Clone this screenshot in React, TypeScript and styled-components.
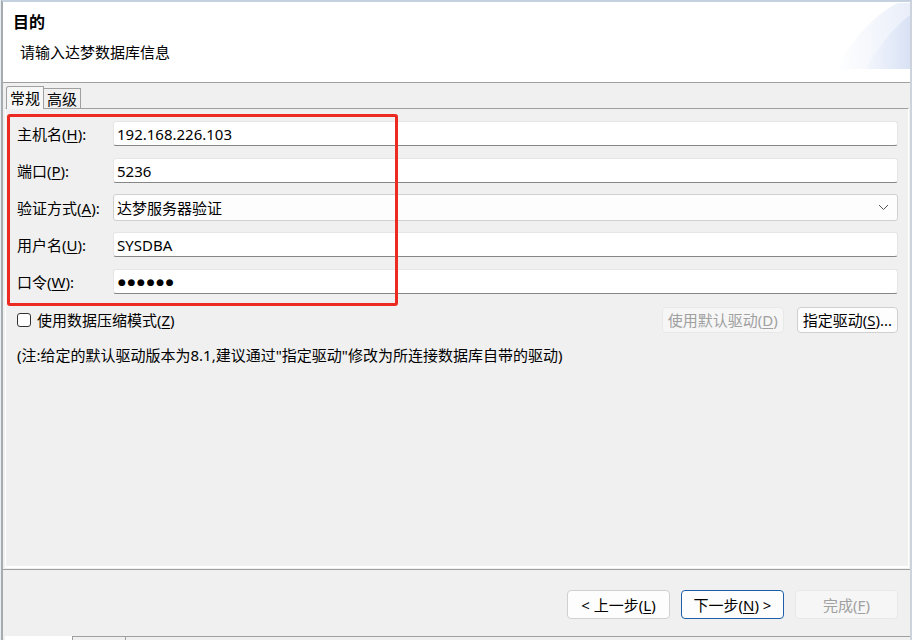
import React from 'react';
import styled, { createGlobalStyle } from 'styled-components';

const GlobalStyle = createGlobalStyle`
  html, body {
    margin: 0;
    padding: 0;
    background: #e9eef3;
  }
  body {
    font-family: "Noto Sans", "Noto Sans CJK SC", sans-serif;
    font-size: 15px;
    color: #000;
  }
  * {
    box-sizing: border-box;
  }
`;

const Frame = styled.div`
  width: 912px;
  height: 640px;
  padding-left: 1px;
  background: #e9eef3;
`;

const Window = styled.div`
  width: 911px;
  height: 640px;
  display: flex;
  flex-direction: column;
  background: #f0f0f0;
  border-top: 2px solid #c5d1de;
  border-left: 2px solid #a6abb0;
  border-right: 2px solid #ccd3dc;
`;

const Header = styled.div`
  height: 81px;
  flex: none;
  display: flex;
  background: #fff;
  border-bottom: 1px solid #a0a0a0;
`;

const HeaderText = styled.div`
  flex: 1;
  padding: 10px 0 0 10px;
  display: flex;
  flex-direction: column;
  gap: 10px;
`;

const Title = styled.div`
  font-size: 16px;
  font-weight: bold;
  line-height: 20px;
`;

const Subtitle = styled.div`
  font-size: 15px;
  line-height: 20px;
  padding-left: 7px;
`;

const Banner = styled.svg`
  flex: none;
  margin-top: 1px;
`;

const Body = styled.div`
  flex: 1;
  display: flex;
  flex-direction: column;
  padding: 3px 0 1px 2px;
`;

const TabRow = styled.div`
  display: flex;
  align-items: flex-end;
  height: 22px;
  padding-left: 1px;
`;

const Tab = styled.div<{ $active?: boolean }>`
  height: ${({ $active }) => ($active ? '23px' : '20px')};
  margin-bottom: ${({ $active }) => ($active ? '-1px' : '0')};
  padding: 0 3px;
  display: flex;
  align-items: center;
  font-size: 15px;
  line-height: 20px;
  background: ${({ $active }) => ($active ? '#f7f7f7' : '#f0f0f0')};
  border: 1px solid #a0a0a0;
  border-bottom: none;
  border-left: ${({ $active }) => ($active ? '1px solid #a0a0a0' : 'none')};
  border-radius: ${({ $active }) => ($active ? '3px 0 0 0' : '0')};
  position: relative;
  z-index: ${({ $active }) => ($active ? 1 : 0)};
`;

const Panel = styled.div`
  flex: 1;
  margin-right: 1px;
  border-top: 1px solid #a0a0a0;
  border-left: 1px solid #fff;
  border-right: 1px solid #fff;
  border-bottom: 2px solid #fff;
  padding: 6px 10px 0 11px;
`;

const Form = styled.div`
  position: relative;
  display: grid;
  grid-template-columns: 96px 1fr;
  grid-auto-rows: 37px;
  align-items: center;
`;

const Highlight = styled.div`
  position: absolute;
  left: -10px;
  top: -1px;
  width: 391px;
  height: 192px;
  border: 3px solid #ec2a22;
  border-radius: 3px;
  pointer-events: none;
`;

const Label = styled.div`
  font-size: 15px;
  line-height: 20px;
  white-space: nowrap;
  u {
    text-decoration-thickness: 1px;
    text-underline-offset: 2px;
  }
`;

const Field = styled.div`
  height: 25px;
  display: flex;
  align-items: center;
  padding-left: 3px;
  background: #fff;
  border: 1px solid #e6e6e6;
  border-bottom: 1px solid #868686;
  border-radius: 3px;
  font-size: 15px;
  line-height: 20px;
`;

const Combo = styled(Field)`
  height: 27px;
  justify-content: space-between;
  padding-right: 8px;
  background: #fdfdfd;
  border: 1px solid #d0d0d0;
`;

const Dots = styled.span`
  font-family: "DejaVu Sans", sans-serif;
  font-size: 9px;
  letter-spacing: 1.7px;
  padding-left: 1px;
`;

const OptionRow = styled.div`
  margin-top: 7px;
  height: 26px;
  display: flex;
  align-items: center;
  gap: 13px;
`;

const CheckLabel = styled.label`
  flex: 1;
  display: flex;
  align-items: center;
  gap: 6px;
  font-size: 15px;
  line-height: 20px;
  u {
    text-decoration-thickness: 1px;
    text-underline-offset: 2px;
  }
`;

const CheckBox = styled.span`
  width: 14px;
  height: 14px;
  border: 1px solid #333;
  border-radius: 3px;
  background: #fff;
`;

const Button = styled.div<{ $disabled?: boolean; $focused?: boolean; $width?: number }>`
  height: ${({ $width }) => ($width ? '29px' : '26px')};
  width: ${({ $width }) => ($width ? `${$width}px` : 'auto')};
  padding: 0 5px;
  display: flex;
  align-items: center;
  justify-content: center;
  white-space: nowrap;
  font-size: 15px;
  line-height: 20px;
  border-radius: 4px;
  color: ${({ $disabled }) => ($disabled ? '#a0a0a0' : '#000')};
  background: ${({ $disabled }) => ($disabled ? '#f6f6f6' : '#fdfdfd')};
  border: 1px solid
    ${({ $disabled, $focused }) => ($focused ? '#1a5fa8' : $disabled ? '#e8e8e8' : '#d0d0d0')};
  u {
    text-decoration-thickness: 1px;
    text-underline-offset: 2px;
  }
`;

const Note = styled.div`
  margin-top: 12px;
  font-size: 15px;
  line-height: 20px;
`;

const Separator = styled.div`
  height: 1px;
  flex: none;
  background: #a0a0a0;
`;

const ButtonBar = styled.div`
  height: 66px;
  flex: none;
  display: flex;
  justify-content: flex-end;
  align-items: flex-start;
  gap: 11px;
  padding: 20px 12px 0 0;
`;

const Strip = styled.div`
  height: 4px;
  flex: none;
  display: flex;
  padding-left: 2px;
`;

const StripCell = styled.div<{ $white?: boolean; $width?: number }>`
  width: ${({ $width }) => ($width ? `${$width}px` : 'auto')};
  flex: ${({ $width }) => ($width ? 'none' : '1')};
  background: ${({ $white }) => ($white ? '#fff' : '#f0f0f0')};
  border-top: ${({ $white }) => ($white ? 'none' : '1px solid #a0a0a0')};
  border-left: ${({ $white }) => ($white ? 'none' : '1px solid #a0a0a0')};
`;

const Chevron = () => (
  <svg width="11" height="7" viewBox="0 0 11 7">
    <polyline points="1,1 5.5,5.5 10,1" fill="none" stroke="#555" strokeWidth="1" />
  </svg>
);

const rows: { label: string; key: string; value: React.ReactNode; combo?: boolean }[] = [
  { label: '主机名', key: 'H', value: '192.168.226.103' },
  { label: '端口', key: 'P', value: '5236' },
  { label: '验证方式', key: 'A', value: '达梦服务器验证', combo: true },
  { label: '用户名', key: 'U', value: 'SYSDBA' },
  { label: '口令', key: 'W', value: <Dots>●●●●●●</Dots> },
];

export default function App() {
  return (
    <Frame>
      <GlobalStyle />
      <Window>
        <Header>
          <HeaderText>
            <Title>目的</Title>
            <Subtitle>请输入达梦数据库信息</Subtitle>
          </HeaderText>
          <Banner width="76" height="66" viewBox="0 0 76 66">
            <defs>
              <linearGradient id="outer" x1="0" y1="0" x2="1" y2="0">
                <stop offset="0" stopColor="#ffffff" />
                <stop offset="1" stopColor="#e9eef9" />
              </linearGradient>
              <linearGradient id="inner" x1="0" y1="0" x2="1" y2="0">
                <stop offset="0" stopColor="#f3f6fc" />
                <stop offset="1" stopColor="#d9e2f5" />
              </linearGradient>
            </defs>
            <path d="M64,0 C42,10 16,38 2,66 L76,66 L76,0 Z" fill="url(#outer)" />
            <path d="M76,12 C60,24 44,44 32,66 L76,66 Z" fill="url(#inner)" />
          </Banner>
        </Header>
        <Body>
          <TabRow>
            <Tab $active>常规</Tab>
            <Tab>高级</Tab>
          </TabRow>
          <Panel>
            <Form>
              <Highlight />
              {rows.map((r) => (
                <React.Fragment key={r.key}>
                  <Label>
                    {r.label}(<u>{r.key}</u>):
                  </Label>
                  {r.combo ? (
                    <Combo>
                      <span>{r.value}</span>
                      <Chevron />
                    </Combo>
                  ) : (
                    <Field>{r.value}</Field>
                  )}
                </React.Fragment>
              ))}
            </Form>
            <OptionRow>
              <CheckLabel>
                <CheckBox />
                <span>
                  使用数据压缩模式(<u>Z</u>)
                </span>
              </CheckLabel>
              <Button $disabled>
                使用默认驱动(<u>D</u>)
              </Button>
              <Button>
                指定驱动(<u>S</u>)...
              </Button>
            </OptionRow>
            <Note>(注:给定的默认驱动版本为8.1,建议通过"指定驱动"修改为所连接数据库自带的驱动)</Note>
          </Panel>
        </Body>
        <Separator />
        <ButtonBar>
          <Button $width={103}>
            &lt; 上一步(<u>L</u>)
          </Button>
          <Button $width={103} $focused>
            下一步(<u>N</u>) &gt;
          </Button>
          <Button $width={103} $disabled>
            完成(<u>F</u>)
          </Button>
        </ButtonBar>
        <Strip>
          <StripCell $white $width={67} />
          <StripCell $width={53} />
          <StripCell />
        </Strip>
      </Window>
    </Frame>
  );
}
